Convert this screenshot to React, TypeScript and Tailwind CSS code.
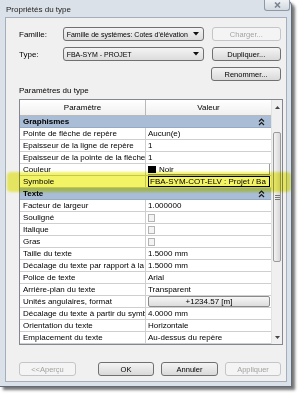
import type { ReactNode } from 'react';

type Row =
  | { kind: 'group'; label: string }
  | { kind: 'prop'; label: string; value?: ReactNode };

function Checkbox() {
  return <span className="block w-[7px] h-[8px] border border-[#b4b4b4] bg-[#f4f4f4]" />;
}

function CollapseIcon() {
  return (
    <svg width="7" height="8" viewBox="0 0 7 8" className="block">
      <path d="M1 3.5 L3.5 1 L6 3.5" fill="none" stroke="#1a1a1a" strokeWidth="1.2" />
      <path d="M1 7 L3.5 4.5 L6 7" fill="none" stroke="#1a1a1a" strokeWidth="1.2" />
    </svg>
  );
}

const rows: Row[] = [
  { kind: 'group', label: 'Graphismes' },
  { kind: 'prop', label: 'Pointe de flèche de repère', value: 'Aucun(e)' },
  { kind: 'prop', label: 'Epaisseur de la ligne de repère', value: '1' },
  { kind: 'prop', label: 'Epaisseur de la pointe de la flèche', value: '1' },
  {
    kind: 'prop',
    label: 'Couleur',
    value: (
      <span className="flex items-center gap-[3px] w-full h-full border-r border-b border-[#9a9a9a]">
        <span className="block w-[8px] h-[7px] bg-black" />
        Noir
      </span>
    ),
  },
  {
    kind: 'prop',
    label: 'Symbole',
    value: (
      <span className="block w-[123px] h-[11px] border border-black px-[1px] overflow-hidden whitespace-nowrap leading-[9px]">
        FBA-SYM-COT-ELV : Projet / Ba
      </span>
    ),
  },
  { kind: 'group', label: 'Texte' },
  { kind: 'prop', label: 'Facteur de largeur', value: '1.000000' },
  { kind: 'prop', label: 'Souligné', value: <Checkbox /> },
  { kind: 'prop', label: 'Italique', value: <Checkbox /> },
  { kind: 'prop', label: 'Gras', value: <Checkbox /> },
  { kind: 'prop', label: 'Taille du texte', value: '1.5000 mm' },
  { kind: 'prop', label: 'Décalage du texte par rapport à la l', value: '1.5000 mm' },
  { kind: 'prop', label: 'Police de texte', value: 'Arial' },
  { kind: 'prop', label: 'Arrière-plan du texte', value: 'Transparent' },
  {
    kind: 'prop',
    label: 'Unités angulaires, format',
    value: (
      <span className="flex items-center justify-center w-full h-[11px] border border-[#8a8a8a] rounded-[2px] bg-gradient-to-b from-[#f6f6f6] to-[#dddddd]">
        +1234.57 [m]
      </span>
    ),
  },
  { kind: 'prop', label: 'Décalage du texte à partir du symb', value: '4.0000 mm' },
  { kind: 'prop', label: 'Orientation du texte', value: 'Horizontale' },
  { kind: 'prop', label: 'Emplacement du texte', value: 'Au-dessus du repère' },
];

function Button({ children, disabled, className = '' }: { children: ReactNode; disabled?: boolean; className?: string }) {
  return (
    <div
      className={
        'flex items-center justify-center h-[14px] rounded-[3px] border text-[7.5px] ' +
        (disabled
          ? 'border-[#c2c6ca] bg-[#f4f4f4] text-[#a3a3a3] '
          : 'border-[#707070] bg-gradient-to-b from-[#f4f4f4] to-[#d9d9d9] text-black ') +
        className
      }
    >
      {children}
    </div>
  );
}

function Combo({ text }: { text: string }) {
  return (
    <div className="flex items-center w-[142px] h-[14px] rounded-[3px] border border-[#707070] bg-gradient-to-b from-[#f4f4f4] to-[#dcdcdc] pl-[3px] pr-[4px]">
      <span className="flex-1 overflow-hidden whitespace-nowrap text-[7px]">{text}</span>
      <svg width="6" height="4" viewBox="0 0 6 4" className="block">
        <path d="M0 0 H6 L3 3.5 Z" fill="#111" />
      </svg>
    </div>
  );
}

function Scrollbar() {
  return (
    <div className="flex flex-col w-[12px] bg-[#f0f0f0] border-l border-[#e2e2e2]">
      <div className="flex items-center justify-center h-[15px]">
        <svg width="5" height="3" viewBox="0 0 5 3">
          <path d="M0 3 L2.5 0 L5 3 Z" fill="#444" />
        </svg>
      </div>
      <div className="h-[17px]" />
      <div className="flex items-center justify-center h-[130px] mx-[1px] rounded-[2px] border border-[#9a9a9a] bg-gradient-to-r from-[#f3f3f3] to-[#d8d8d8]">
        <div className="flex flex-col gap-[1px]">
          <span className="block w-[5px] h-[1px] bg-[#777]" />
          <span className="block w-[5px] h-[1px] bg-[#777]" />
          <span className="block w-[5px] h-[1px] bg-[#777]" />
        </div>
      </div>
      <div className="flex-1" />
      <div className="flex items-center justify-center h-[13px]">
        <svg width="5" height="3" viewBox="0 0 5 3">
          <path d="M0 0 L5 0 L2.5 3 Z" fill="#444" />
        </svg>
      </div>
    </div>
  );
}

export default function App() {
  return (
    <div className="relative w-[300px] h-[396px] bg-white font-['Liberation_Sans',Arial,sans-serif] text-[8px] text-black leading-[11px]">
      {/* Window */}
      <div className="flex flex-col w-[292px] h-[387px] bg-[#dbe1e8] rounded-tr-[6px] border-r border-b border-[#5f6b78] shadow-[3px_3px_3px_rgba(0,0,0,0.55)]">
        {/* Title bar */}
        <div className="flex items-start justify-between h-[17px] pl-[6px] pr-[1px]">
          <span className="mt-[4px] text-[8px] text-[#222]">Propriétés du type</span>
          <div className="flex items-center justify-center w-[26px] h-[11px] rounded-b-[3px] border border-t-0 border-[#8d99a6] bg-gradient-to-b from-[#eef1f4] to-[#d3d9e0]">
            <svg width="7" height="6" viewBox="0 0 7 6">
              <path d="M1 0.5 L6 5.5 M6 0.5 L1 5.5" stroke="#7a8490" strokeWidth="1.6" />
            </svg>
          </div>
        </div>

        {/* Client area */}
        <div className="flex flex-col flex-1 ml-[5px] mr-[4px] mb-[4px] border border-[#a5afbb] bg-[#f0f0f0] pl-[13px] pr-[5px] pt-[9px]">
          <div className="flex items-center h-[14px]">
            <span className="w-[44px]">Famille:</span>
            <Combo text="Famille de systèmes: Cotes d'élévation" />
            <Button disabled className="ml-[8px] w-[70px]">Charger...</Button>
          </div>
          <div className="flex items-center h-[14px] mt-[6px]">
            <span className="w-[44px]">Type:</span>
            <Combo text="FBA-SYM - PROJET" />
            <Button className="ml-[8px] w-[70px]">Dupliquer...</Button>
          </div>
          <div className="flex justify-end h-[14px] mt-[6px]">
            <Button className="w-[70px]">Renommer...</Button>
          </div>
          <div className="mt-[4px] h-[12px] leading-[12px]">Paramètres du type</div>

          {/* Property grid */}
          <div className="flex mt-[2px] w-[264px] h-[246px] border border-[#828790] bg-white">
            <div className="flex flex-col w-[251px]">
              <div className="flex h-[16px] border-b border-[#b9b9b9] bg-gradient-to-b from-[#ffffff] to-[#f0f0f0]">
                <div className="flex items-center justify-center w-[126px] border-r border-[#b9b9b9]">Paramètre</div>
                <div className="flex items-center justify-center flex-1">Valeur</div>
              </div>
              {rows.map((r, i) =>
                r.kind === 'group' ? (
                  <div key={i} className="flex items-center justify-between h-[12px] px-[3px] bg-[#a9bdd6] border-b border-[#97aac3]">
                    <span className="font-bold">{r.label}</span>
                    <span className="mr-[3px]">
                      <CollapseIcon />
                    </span>
                  </div>
                ) : (
                  <div key={i} className="flex h-[12px] border-b border-[#cfcfcf]">
                    <div className="w-[126px] pl-[3px] border-r border-[#cfcfcf] overflow-hidden whitespace-nowrap">{r.label}</div>
                    <div className="flex items-center flex-1 pl-[2px] pr-[1px] overflow-hidden whitespace-nowrap">{r.value}</div>
                  </div>
                )
              )}
            </div>
            <Scrollbar />
          </div>

          {/* Footer buttons */}
          <div className="flex items-center mt-[17px]">
            <Button disabled className="w-[57px]">&lt;&lt;Aperçu</Button>
            <Button className="ml-[22px] w-[56px]">OK</Button>
            <Button className="ml-[7px] w-[57px]">Annuler</Button>
            <Button disabled className="ml-[7px] w-[56px]">Appliquer</Button>
          </div>
        </div>
      </div>

      {/* Highlighter mark over the Symbole row */}
      <div className="absolute left-[7px] top-[172px] w-[284px] h-[20px] rounded-[4px] bg-[#f0f040] opacity-80 mix-blend-multiply blur-[1px]" />
    </div>
  );
}
